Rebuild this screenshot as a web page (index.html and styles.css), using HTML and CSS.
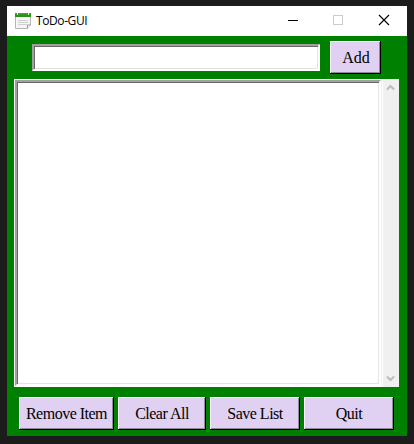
FILE: index.html
```html
<!DOCTYPE html>
<html lang="en">
<head>
<meta charset="utf-8">
<title>ToDo-GUI</title>
<link rel="stylesheet" href="styles.css">
</head>
<body>
<main class="window">
  <header class="titlebar">
    <svg class="app-icon" width="18" height="18" viewBox="0 0 18 18">
      <path d="M1.500 3.500h15v9.500l-3 3.500h-12z" fill="#f5f5f5" stroke="#b5b5b5"/>
      <path d="M13.500 16.500v-3.500h3" fill="#fff" stroke="#999"/>
      <path d="M1 1h16v4H1z" fill="#2c8c20"/>
      <path d="M1 1h16v1.500H1z" fill="#46a032"/>
      <path d="M3.500 1v2M14.500 1v2" stroke="#d8efcc"/>
      <path d="M4 8.500h10M4 10.500h10M4 12.500h9" stroke="#cfcfcf"/>
    </svg>
    <h1 class="title">ToDo-GUI</h1>
    <svg class="controls" width="104" height="12" viewBox="0 0 104 12">
      <path d="M1 6.500h10" stroke="#000"/>
      <rect x="46.500" y="1.500" width="9" height="9" fill="none" stroke="#ccc"/>
      <path d="M92 1l10 10M102 1L92 11" stroke="#000" stroke-width="1.100"/>
    </svg>
  </header>
  <div class="entry-row">
    <input class="entry sunken" type="text" aria-label="New item">
    <button class="button add">Add</button>
  </div>
  <div class="list-area">
    <div class="list-frame"><div class="list sunken"></div></div>
    <div class="scrollbar">
      <svg width="9" height="7" viewBox="0 0 9 7"><path d="M1 5.500L4.500 2L8 5.500" fill="none" stroke="#bcbcbc" stroke-width="2"/></svg>
      <svg width="9" height="7" viewBox="0 0 9 7"><path d="M1 1.500L4.500 5L8 1.500" fill="none" stroke="#bcbcbc" stroke-width="2"/></svg>
    </div>
  </div>
  <div class="actions">
    <button class="button remove">Remove Item</button>
    <button class="button clear">Clear All</button>
    <button class="button">Save List</button>
    <button class="button">Quit</button>
  </div>
</main>
</body>
</html>
```
FILE: styles.css
```css
* { box-sizing: border-box; }
body {
  margin: 0;
  height: 444px;
  padding: 6px 7px 8px;
  background: #1c1c1c;
  overflow: hidden;
}
.window {
  width: 400px;
  height: 430px;
  background: #008000;
}
.titlebar {
  display: flex;
  align-items: center;
  height: 30px;
  padding: 0 16px 0 7px;
  background: #fff;
}
.title {
  flex: 1;
  margin: 0 0 0 4px;
  font: 12px/16px "Open Sans", "Noto Sans", sans-serif;
  letter-spacing: -0.4px;
  color: #000;
}
.controls { margin-bottom: 2px; }
.entry-row {
  display: flex;
  align-items: center;
  gap: 10px;
  padding: 5px 0 0 25px;
}
.sunken {
  border: 2px solid;
  border-color: #a0a0a0 #fff #fff #a0a0a0;
  background: #fff;
  box-shadow: inset 1px 1px #696969, inset -1px -1px #e3e3e3;
}
.entry {
  width: 288px;
  height: 27px;
  padding: 2px 4px;
  border-radius: 0;
  outline: none;
  font: 16px "Liberation Serif", serif;
}
.button {
  width: 90px;
  height: 33px;
  padding: 0;
  border: 0;
  border-radius: 0;
  background: #e0d0f2;
  box-shadow: inset -1px -1px #000, inset 1px 1px #fff, inset -2px -2px #93889f;
  color: #000;
  font: 16px/33px "Liberation Serif", serif;
  letter-spacing: -0.5px;
}
.add {
  width: 51px;
  padding-left: 1px;
  letter-spacing: 0;
}
.list-area {
  display: flex;
  height: 308px;
  margin: 5px 8px 0 7px;
  background: #fff;
}
.list-frame {
  width: 369px;
  padding: 1px 2px 0 1px;
  background: linear-gradient(#f0f0f0, #f0f0f0) 367px 0 / 1px 100% no-repeat;
}
.list { height: 306px; }
.scrollbar {
  display: flex;
  flex: 1;
  flex-direction: column;
  align-items: center;
  justify-content: space-between;
  padding: 5px 1px 5px 0;
  background: #f0f0f0;
}
.actions {
  display: flex;
  gap: 4px;
  padding: 10px 0 0 12px;
}
.remove { width: 95px; }
.clear { width: 88px; }
```
